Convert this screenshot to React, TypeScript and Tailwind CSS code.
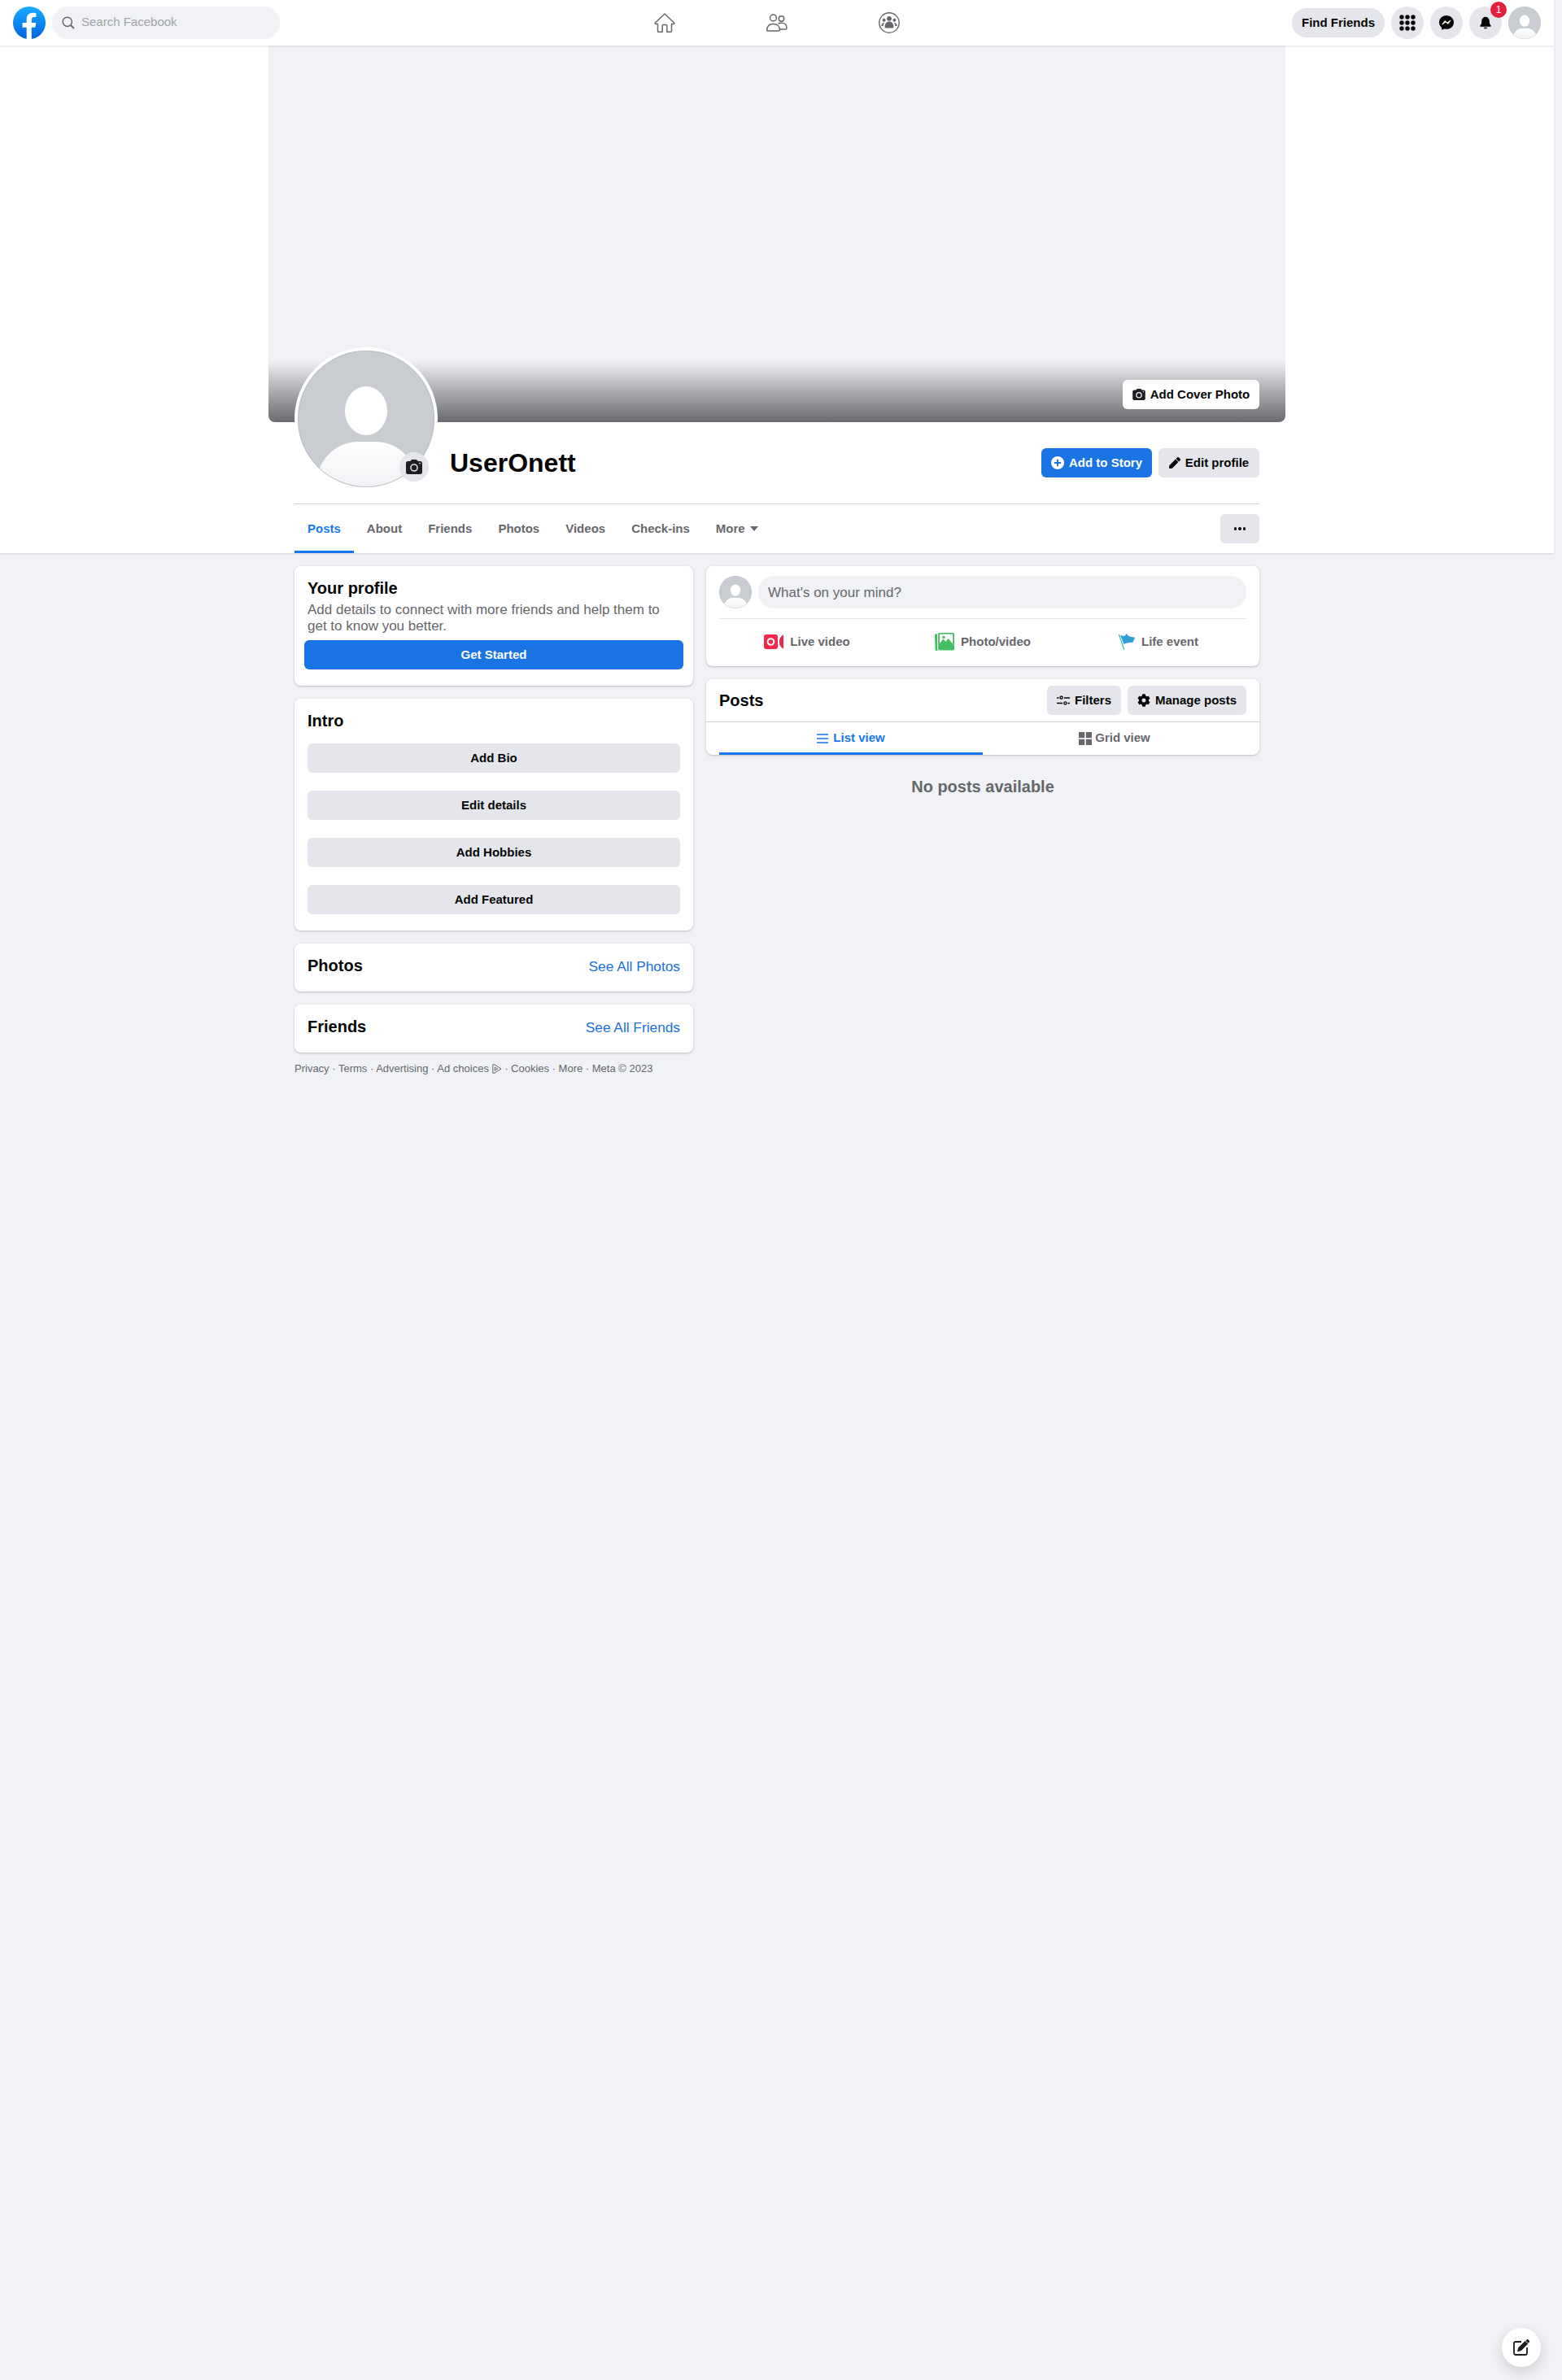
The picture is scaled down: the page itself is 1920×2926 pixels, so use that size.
import React from "react";
import { FaCog, FaPen } from "react-icons/fa";

const tabs = ["Posts", "About", "Friends", "Photos", "Videos", "Check-ins"];
const introButtons = ["Add Bio", "Edit details", "Add Hobbies", "Add Featured"];

const FacebookLogo = () => (
  <svg viewBox="0 0 40 40" className="w-10 h-10 shrink-0">
    <defs>
      <linearGradient id="fbGrad" x1="0" y1="0" x2="0" y2="1">
        <stop offset="0" stopColor="#18acfe" />
        <stop offset="1" stopColor="#0163e0" />
      </linearGradient>
    </defs>
    <circle cx="20" cy="20" r="20" fill="url(#fbGrad)" />
    <path
      d="M16.7 40V25.8H11.6V20H16.7V15.6C16.7 10.6 19.7 7.8 24.3 7.8C26.5 7.8 28.4 8.2 28.4 8.2V13H26C23.5 13 22.8 14.5 22.8 16.1V20H28.2L27.3 25.8H22.8V40Z"
      fill="#fff"
    />
  </svg>
);

// Default grey silhouette, drawn on a 168 box so it scales to any size
const Avatar = ({ id, className }: { id: string; className: string }) => (
  <svg viewBox="0 0 168 168" className={className}>
    <defs>
      <clipPath id={`clip-${id}`}>
        <circle cx="84" cy="84" r="84" />
      </clipPath>
      <linearGradient id={`body-${id}`} x1="0" y1="0" x2="0" y2="1">
        <stop offset="0" stopColor="#ffffff" />
        <stop offset="1" stopColor="#f0f2f5" />
      </linearGradient>
    </defs>
    <g clipPath={`url(#clip-${id})`}>
      <rect width="168" height="168" fill="#c9ccd1" />
      <ellipse cx="84" cy="74" rx="26" ry="30" fill="#fff" />
      <path
        d="M27 144C36 124 54 112 75 112H93C115 112 131 122 141 140V168H27Z"
        fill={`url(#body-${id})`}
      />
    </g>
    <circle cx="84" cy="84" r="83.5" fill="none" stroke="#bcc0c4" strokeWidth="1" />
  </svg>
);

const CameraIcon = ({ className }: { className: string }) => (
  <svg viewBox="0 0 20 18" className={className} fill="#1c1e21">
    <path
      fillRule="evenodd"
      d="M6.2 0.8C6.5 0.3 7 0 7.6 0H12.4C13 0 13.5 0.3 13.8 0.8L14.6 2H17.5C18.9 2 20 3.1 20 4.5V15.5C20 16.9 18.9 18 17.5 18H2.5C1.1 18 0 16.9 0 15.5V4.5C0 3.1 1.1 2 2.5 2H5.4ZM10 14.8A4.8 4.8 0 1 0 10 5.2A4.8 4.8 0 0 0 10 14.8ZM10 13.3A3.3 3.3 0 1 1 10 6.7A3.3 3.3 0 0 1 10 13.3ZM17 5.5A0.9 0.9 0 1 0 17 3.7A0.9 0.9 0 0 0 17 5.5Z"
    />
  </svg>
);

const HomeIcon = () => (
  <svg viewBox="0 0 26 24" className="w-[26px] h-6" fill="none" stroke="#65676b" strokeWidth="1.5" strokeLinejoin="round" strokeLinecap="round">
    <path d="M13 1L1 12.5L2 13.5H4.5V22.5C4.5 23 4.8 23.2 5.2 23.2H10.2V15.5C10.2 14.9 10.6 14.5 11.2 14.5H14.8C15.4 14.5 15.8 14.9 15.8 15.5V23.2H20.8C21.2 23.2 21.5 23 21.5 22.5V13.5H24L25 12.5Z" />
  </svg>
);

const FriendsIcon = () => (
  <svg viewBox="0 0 26 22" className="w-[26px] h-[22px]" fill="none" stroke="#65676b" strokeWidth="1.5">
    <circle cx="8.5" cy="5" r="4" />
    <circle cx="18.5" cy="6" r="3.2" />
    <path d="M1 21H15C16 21 16.4 20.5 16.4 19.6C16.4 15.5 13.5 12.5 9 12.5H7.5C3.5 12.5 0.8 15.5 0.8 19.6C0.8 20.5 1 21 1 21Z" strokeLinejoin="round" />
    <path d="M14.5 12C15.5 11.4 16.8 11.2 18 11.2H19C22.5 11.2 25 13.6 25 17.2C25 18.6 24.5 19 23.5 19H16.5" strokeLinejoin="round" />
  </svg>
);

const GroupsIcon = () => (
  <svg viewBox="0 0 26 26" className="w-[26px] h-[26px]">
    <circle cx="13" cy="13" r="12.2" fill="none" stroke="#65676b" strokeWidth="1.4" />
    <circle cx="13" cy="7.8" r="2.9" fill="#65676b" />
    <circle cx="6.6" cy="9.8" r="2" fill="#65676b" />
    <circle cx="19.4" cy="9.8" r="2" fill="#65676b" />
    <path d="M7.6 18.2C7.6 14 9.8 11.6 13 11.6C16.2 11.6 18.4 14 18.4 18.2C18.4 18.9 18 19.4 17.2 19.4H8.8C8 19.4 7.6 18.9 7.6 18.2Z" fill="#65676b" />
    <path d="M6.4 12.8C4.8 13.4 3.4 14.8 3.2 17H5.6C5.7 15.5 6.1 14.2 6.9 13.2ZM19.6 12.8C21.2 13.4 22.6 14.8 22.8 17H20.4C20.3 15.5 19.9 14.2 19.1 13.2Z" fill="#65676b" />
  </svg>
);

const GridDots = () => (
  <svg viewBox="0 0 20 20" className="w-5 h-5" fill="#050505">
    {[3, 10, 17].map((y) =>
      [3, 10, 17].map((x) => <circle key={`${x}-${y}`} cx={x} cy={y} r="2.7" />)
    )}
  </svg>
);

const MessengerIcon = () => (
  <svg viewBox="0 0 20 20" className="w-5 h-5">
    <path
      d="M10 1C4.9 1 1 4.7 1 9.4C1 11.9 2 14 3.8 15.5C3.9 15.6 4 15.8 4 16L4.1 17.7C4.1 18.3 4.7 18.7 5.2 18.4L7.1 17.6C7.3 17.5 7.4 17.5 7.6 17.5C8.4 17.7 9.2 17.8 10 17.8C15.1 17.8 19 14.1 19 9.4C19 4.7 15.1 1 10 1Z"
      fill="#050505"
    />
    <path d="M4.8 12L8 7.5L10.9 9.8L15.2 6.9L12 11.4L9.1 9.1Z" fill="#fff" stroke="#fff" strokeWidth="0.8" strokeLinejoin="round" />
  </svg>
);

const BellIcon = () => (
  <svg viewBox="0 0 20 20" className="w-4 h-4" fill="#050505">
    <path d="M10 1C6.4 1 4.2 3.6 4 7L3.8 10.2C3.7 11.3 3.2 12.2 2.5 13C2 13.6 1.5 14.2 1.5 14.8C1.5 15.5 2 16 2.8 16H17.2C18 16 18.5 15.5 18.5 14.8C18.5 14.2 18 13.6 17.5 13C16.8 12.2 16.3 11.3 16.2 10.2L16 7C15.8 3.6 13.6 1 10 1Z" />
    <path d="M7.2 17.2H12.8C12.5 18.4 11.4 19.2 10 19.2C8.6 19.2 7.5 18.4 7.2 17.2Z" />
  </svg>
);

const PlusCircle = () => (
  <svg viewBox="0 0 16 16" className="w-4 h-4">
    <circle cx="8" cy="8" r="8" fill="#fff" />
    <path d="M8 3.8V12.2M3.8 8H12.2" stroke="#1b74e4" strokeWidth="1.9" />
  </svg>
);

const LiveVideoIcon = () => (
  <svg viewBox="0 0 24 18" className="w-6 h-[18px]">
    <rect x="0" y="0" width="17" height="18" rx="3" fill="#f02849" />
    <circle cx="8.5" cy="9" r="3.8" fill="none" stroke="#fff" strokeWidth="2" />
    <path d="M19 7.5C19 5 21 2.2 23.2 0.8C23.6 0.6 24 0.8 24 1.3V16.7C24 17.2 23.6 17.4 23.2 17.2C21 15.8 19 13 19 10.5Z" fill="#f02849" />
  </svg>
);

const PhotoVideoIcon = () => (
  <svg viewBox="0 0 24 22" className="w-6 h-[22px]">
    <path d="M4 1.2L1 1.6C0.4 1.7 0 2.2 0 2.8L0.6 20.8C0.6 21.5 1.2 22 1.9 21.9L4.5 21.6C3.6 21.3 3 20.6 3 19.6V2.6C3 2 3.4 1.5 4 1.2Z" fill="#45bd62" />
    <rect x="4.2" y="0" width="19.8" height="21.4" rx="1.6" fill="#45bd62" />
    <rect x="6" y="1.6" width="16.2" height="15" fill="#fff" />
    <circle cx="11" cy="5.4" r="1.7" fill="#45bd62" />
    <path d="M6 19V13L10.5 7.5L13.5 11L16.5 7L22.2 13.5V19Z" fill="#45bd62" />
  </svg>
);

const LifeEventIcon = () => (
  <svg viewBox="0 0 20 20" className="w-5 h-5">
    <path d="M0 1.2C0 0.6 0.9 0.4 1.1 1L7.2 19.2C7.4 19.8 6.4 20.2 6.1 19.6Z" fill="#2abba7" />
    <path d="M2 1.6C4 3 6 3.4 8 2.6L9.6 0.4C10 0 10.4 0.2 10.5 0.6C11 2.6 13 4 19.4 4.6C19.9 4.7 20 5.1 19.8 5.5L17.6 10.6C14 11.6 10 10.6 6.6 13.2Z" fill="#2d9ed8" />
  </svg>
);

const FiltersIcon = () => (
  <svg viewBox="0 0 16 12" className="w-4 h-3" fill="none" stroke="#050505" strokeWidth="1.3">
    <path d="M0 3H2.5M9 3H16M0 9.5H7M13.5 9.5H16" />
    <circle cx="5.6" cy="2.6" r="1.6" />
    <circle cx="10.4" cy="9.4" r="1.6" />
  </svg>
);

const ListIcon = () => (
  <svg viewBox="0 0 14 12" className="w-[14px] h-3" stroke="#1877f2" strokeWidth="1.4">
    <path d="M0 1H14M0 6H14M0 11H14" />
  </svg>
);

const GridViewIcon = () => (
  <svg viewBox="0 0 16 16" className="w-4 h-4" fill="#65676b">
    <rect width="7.2" height="7.2" />
    <rect x="8.8" width="7.2" height="7.2" />
    <rect y="8.8" width="7.2" height="7.2" />
    <rect x="8.8" y="8.8" width="7.2" height="7.2" />
  </svg>
);

const AdChoicesIcon = () => (
  <svg viewBox="0 0 12 12" className="inline-block w-3 h-3 align-[-2px]" fill="none" stroke="#65676b" strokeWidth="1">
    <path d="M0.8 0.8H3L11 6L3 11.2H0.8ZM3.2 4L6.8 6L3.2 8.2V4Z" />
  </svg>
);

const ComposeIcon = () => (
  <svg viewBox="0 0 20 20" className="w-5 h-5" fill="none" stroke="#1c1e21" strokeWidth="1.8">
    <path d="M10 3H3.2C2 3 1 4 1 5.2V16.8C1 18 2 19 3.2 19H14.8C16 19 17 18 17 16.8V10" />
    <path d="M6.2 14L7 10.8L14.6 3.2L17 5.6L9.4 13.2Z" fill="#1c1e21" />
    <path d="M17.6 0.8L19.4 2.6L18.4 3.6L16.6 1.8Z" fill="#1c1e21" />
  </svg>
);

const Card: React.FC<{ className?: string; children: React.ReactNode }> = ({ className = "", children }) => (
  <div className={`bg-white rounded-lg shadow-[0_1px_3px_rgba(0,0,0,0.22)] ${className}`}>{children}</div>
);

const CircleButton: React.FC<{ children: React.ReactNode }> = ({ children }) => (
  <div className="w-10 h-10 rounded-full bg-[#e4e6eb] flex items-center justify-center">{children}</div>
);

const App: React.FC = () => {
  return (
    <div className="min-h-screen bg-[#f0f2f5] pr-[10px] font-['Liberation_Sans',Arial,sans-serif] text-[#050505]">
      {/* Top bar */}
      <header className="relative z-10 h-14 bg-white shadow-[0_1px_2px_rgba(0,0,0,0.12)] grid grid-cols-[1fr_auto_1fr] items-center px-4">
        <div className="flex items-center gap-2">
          <FacebookLogo />
          <div className="w-[280px] h-10 rounded-full bg-[#f0f2f5] flex items-center pl-3 gap-2 pb-[1px]">
            <svg viewBox="0 0 16 16" className="w-4 h-4" fill="none" stroke="#65676b" strokeWidth="1.5">
              <circle cx="6.8" cy="6.8" r="5.6" />
              <path d="M11 11L15 15" strokeWidth="1.8" />
            </svg>
            <span className="text-[15px] text-[#a3a5a9]">Search Facebook</span>
          </div>
        </div>
        <nav className="flex items-center">
          <div className="w-[138px] flex justify-center"><HomeIcon /></div>
          <div className="w-[138px] flex justify-center"><FriendsIcon /></div>
          <div className="w-[138px] flex justify-center"><GroupsIcon /></div>
        </nav>
        <div className="flex items-center justify-end gap-2">
          <div className="h-9 px-3 rounded-full bg-[#e4e6eb] flex items-center text-[15px] font-bold pt-[1px]">Find Friends</div>
          <CircleButton><GridDots /></CircleButton>
          <CircleButton><MessengerIcon /></CircleButton>
          <div className="relative">
            <CircleButton><BellIcon /></CircleButton>
            <span className="absolute -top-[6px] -right-[6px] w-5 h-5 rounded-full bg-[#e41e3f] text-white text-[12px] flex items-center justify-center">1</span>
          </div>
          <Avatar id="nav" className="w-10 h-10" />
        </div>
      </header>

      {/* Profile header */}
      <section className="bg-white shadow-[0_1px_2px_rgba(0,0,0,0.12)]">
        <div className="relative w-[1250px] h-[463px] mx-auto bg-[#f0f2f5] rounded-b-lg flex flex-col justify-end overflow-hidden">
          <div className="h-[76px] bg-gradient-to-b from-[#f0f2f5] to-[#6a6b6f]" />
          <button className="absolute right-8 bottom-4 h-9 w-[168px] bg-white rounded-md flex items-center justify-center gap-[6px] text-[15px] font-bold">
            <CameraIcon className="w-4 h-[14px]" />
            Add Cover Photo
          </button>
        </div>
        <div className="w-[1186px] mx-auto">
          <div className="relative h-[101px] flex items-center justify-between border-b border-[#ced0d4]">
            <div className="absolute left-0 -top-[92px] w-[176px] h-[176px] rounded-full bg-white p-1">
              <Avatar id="profile" className="w-[168px] h-[168px]" />
              <div className="absolute left-[129px] top-[129px] w-9 h-9 rounded-full bg-[#e4e6eb] flex items-center justify-center">
                <CameraIcon className="w-5 h-[18px]" />
              </div>
            </div>
            <h1 className="ml-[191px] text-[32px] font-bold">UserOnett</h1>
            <div className="flex gap-2">
              <button className="h-9 w-[136px] rounded-md bg-[#1b74e4] text-white text-[15px] font-bold flex items-center justify-center gap-[6px]">
                <PlusCircle />
                Add to Story
              </button>
              <button className="h-9 w-[124px] rounded-md bg-[#e4e6eb] text-[15px] font-bold flex items-center justify-center gap-[6px]">
                <FaPen className="w-[14px] h-[14px]" />
                Edit profile
              </button>
            </div>
          </div>
          <div className="h-[60px] flex items-center justify-between">
            <div className="flex h-full">
              {tabs.map((tab, i) => (
                <div
                  key={tab}
                  className={`h-full px-4 flex items-center text-[15px] font-bold ${
                    i === 0 ? "text-[#1877f2] border-b-[3px] border-[#1877f2] pt-[3px]" : "text-[#65676b]"
                  }`}
                >
                  {tab}
                </div>
              ))}
              <div className="h-full px-4 flex items-center gap-[6px] text-[15px] font-bold text-[#65676b]">
                More
                <span className="w-0 h-0 border-x-[5px] border-x-transparent border-t-[6px] border-t-[#65676b]" />
              </div>
            </div>
            <button className="w-12 h-9 rounded-md bg-[#e4e6eb] flex items-center justify-center gap-[2px]">
              <span className="w-[3.5px] h-[3.5px] rounded-full bg-[#050505]" />
              <span className="w-[3.5px] h-[3.5px] rounded-full bg-[#050505]" />
              <span className="w-[3.5px] h-[3.5px] rounded-full bg-[#050505]" />
            </button>
          </div>
        </div>
      </section>

      {/* Main columns */}
      <main className="w-[1186px] mx-auto mt-4 flex gap-4 items-start">
        <div className="w-[490px] flex flex-col gap-4">
          <Card className="px-3 pt-[13px] pb-5">
            <h2 className="px-1 text-[20px] leading-7 font-bold">Your profile</h2>
            <p className="px-1 mt-[3px] text-[17px] leading-5 text-[#65676b]">
              Add details to connect with more friends and help them to get to know you better.
            </p>
            <button className="mt-[7px] w-full h-9 rounded-md bg-[#1b74e4] text-white text-[15px] font-bold">Get Started</button>
          </Card>
          <Card className="px-4 pt-[13px] pb-5">
            <h2 className="text-[20px] leading-7 font-bold">Intro</h2>
            <div className="mt-[14px] flex flex-col gap-[22px]">
              {introButtons.map((label) => (
                <button key={label} className="h-9 rounded-md bg-[#e4e6eb] text-[15px] font-bold">{label}</button>
              ))}
            </div>
          </Card>
          <Card className="h-[59px] px-4 flex items-center justify-between">
            <h2 className="text-[20px] leading-7 font-bold pb-[6px]">Photos</h2>
            <span className="text-[17.3px] text-[#216fdb] pb-[2px]">See All Photos</span>
          </Card>
          <Card className="h-[59px] px-4 flex items-center justify-between">
            <h2 className="text-[20px] leading-7 font-bold pb-[6px]">Friends</h2>
            <span className="text-[17.3px] text-[#216fdb] pb-[2px]">See All Friends</span>
          </Card>
          <p className="-mt-[4px] text-[13px] leading-4 text-[#65676b]">
            Privacy · Terms · Advertising · Ad choices <AdChoicesIcon /> · Cookies · More · Meta © 2023
          </p>
        </div>

        <div className="w-[680px] flex flex-col gap-4">
          <Card className="px-4 pt-3 h-[123px]">
            <div className="flex gap-2 pb-3 border-b border-[#e4e6eb] h-[53px]">
              <Avatar id="composer" className="w-10 h-10 shrink-0" />
              <div className="flex-1 h-10 rounded-full bg-[#f0f2f5] flex items-center px-3 pt-[2px] text-[17px] text-[#65676b]">
                What's on your mind?
              </div>
            </div>
            <div className="grid grid-cols-3 h-[56px]">
              <div className="flex items-center justify-center gap-2 text-[15px] font-bold text-[#65676b]">
                <LiveVideoIcon />
                Live video
              </div>
              <div className="flex items-center justify-center gap-2 text-[15px] font-bold text-[#65676b]">
                <PhotoVideoIcon />
                Photo/video
              </div>
              <div className="flex items-center justify-center gap-2 text-[15px] font-bold text-[#65676b]">
                <LifeEventIcon />
                Life event
              </div>
            </div>
          </Card>

          <Card className="h-[93px]">
            <div className="h-[53px] px-4 flex items-center justify-between border-b border-[#ced0d4]">
              <h2 className="text-[20px] font-bold">Posts</h2>
              <div className="flex gap-2">
                <button className="h-9 w-[91px] rounded-md bg-[#e4e6eb] text-[15px] font-bold flex items-center justify-center gap-[6px]">
                  <FiltersIcon />
                  Filters
                </button>
                <button className="h-9 w-[146px] rounded-md bg-[#e4e6eb] text-[15px] font-bold flex items-center justify-center gap-[6px]">
                  <FaCog className="w-4 h-4" />
                  Manage posts
                </button>
              </div>
            </div>
            <div className="mx-4 grid grid-cols-2 h-[40px]">
              <div className="flex items-center justify-center gap-[6px] pt-[2px] border-b-[3px] border-[#1877f2] text-[15px] font-bold text-[#1877f2]">
                <ListIcon />
                List view
              </div>
              <div className="flex items-center justify-center gap-1 pt-[2px] pb-[3px] text-[15px] font-bold text-[#65676b]">
                <GridViewIcon />
                Grid view
              </div>
            </div>
          </Card>

          <p className="mt-[8px] text-center text-[20px] font-bold text-[#65676b]">No posts available</p>
        </div>
      </main>

      <button className="fixed right-[26px] bottom-4 w-12 h-12 rounded-full bg-white shadow-[0_6px_16px_rgba(0,0,0,0.15)] flex items-center justify-center">
        <ComposeIcon />
      </button>
    </div>
  );
};

export default App;
